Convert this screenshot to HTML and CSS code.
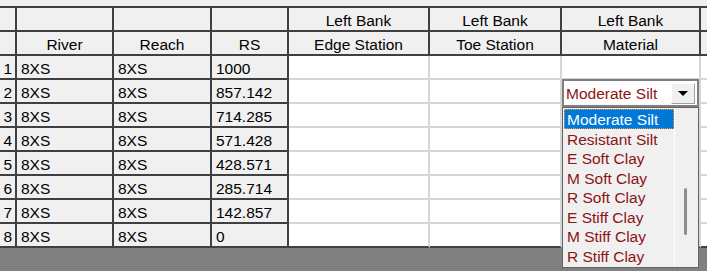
FILE: index.html
```html
<!DOCTYPE html>
<html lang="en">
  <head>
    <meta charset="UTF-8" />
    <meta name="viewport" content="width=device-width, initial-scale=1.0" />
    <title>Cross Section Data</title>
    <link rel="stylesheet" href="styles.css">
  </head>
  <body>
    <div class="toolbar"></div>
    <div class="gridwrap">
      <table class="grid">
        <colgroup>
          <col class="c-num" />
          <col class="c-river" />
          <col class="c-reach" />
          <col class="c-rs" />
          <col class="c-edge" />
          <col class="c-toe" />
          <col class="c-mat" />
          <col class="c-more" />
        </colgroup>
        <thead>
          <tr>
            <th></th>
            <th></th>
            <th></th>
            <th></th>
            <th>Left Bank</th>
            <th>Left Bank</th>
            <th>Left Bank</th>
            <th class="more"></th>
          </tr>
          <tr>
            <th></th>
            <th>River</th>
            <th>Reach</th>
            <th>RS</th>
            <th>Edge Station</th>
            <th>Toe Station</th>
            <th>Material</th>
            <th class="more"></th>
          </tr>
        </thead>
        <tbody>
          <tr><td class="num">1</td><td class="fixed">8XS</td><td class="fixed">8XS</td><td class="fixed">1000</td><td></td><td></td><td></td><td class="more"></td></tr>
          <tr><td class="num">2</td><td class="fixed">8XS</td><td class="fixed">8XS</td><td class="fixed">857.142</td><td></td><td></td><td></td><td class="more"></td></tr>
          <tr><td class="num">3</td><td class="fixed">8XS</td><td class="fixed">8XS</td><td class="fixed">714.285</td><td></td><td></td><td></td><td class="more"></td></tr>
          <tr><td class="num">4</td><td class="fixed">8XS</td><td class="fixed">8XS</td><td class="fixed">571.428</td><td></td><td></td><td></td><td class="more"></td></tr>
          <tr><td class="num">5</td><td class="fixed">8XS</td><td class="fixed">8XS</td><td class="fixed">428.571</td><td></td><td></td><td></td><td class="more"></td></tr>
          <tr><td class="num">6</td><td class="fixed">8XS</td><td class="fixed">8XS</td><td class="fixed">285.714</td><td></td><td></td><td></td><td class="more"></td></tr>
          <tr><td class="num">7</td><td class="fixed">8XS</td><td class="fixed">8XS</td><td class="fixed">142.857</td><td></td><td></td><td></td><td class="more"></td></tr>
          <tr class="last"><td class="num">8</td><td class="fixed">8XS</td><td class="fixed">8XS</td><td class="fixed">0</td><td></td><td></td><td></td><td class="more"></td></tr>
        </tbody>
      </table>

      <div class="combo">
        <span class="combo-text">Moderate Silt</span>
        <span class="combo-btn"><span class="arrow"></span></span>
      </div>

      <div class="droplist">
        <ul class="items">
          <li class="selected">Moderate Silt</li>
          <li>Resistant Silt</li>
          <li>E Soft Clay</li>
          <li>M Soft Clay</li>
          <li>R Soft Clay</li>
          <li>E Stiff Clay</li>
          <li>M Stiff Clay</li>
          <li>R Stiff Clay</li>
        </ul>
        <div class="scroll"><div class="thumb"></div></div>
      </div>
    </div>
  </body>
</html>
```

FILE: styles.css
```css
body {
  margin: 0;
  background-color: #808080;
  font-family: "Liberation Sans", Arial, sans-serif;
  font-size: 15.5px;
  color: #000;
  width: 707px;
  height: 271px;
  overflow: hidden;
}
.toolbar {
  height: 6px;
  background-color: #f0f0f0;
}
.gridwrap {
  position: relative;
  width: 707px;
}
.grid {
  border-collapse: separate;
  border-spacing: 0;
  table-layout: fixed;
  width: 707px;
  border-top: 2px solid #404040;
}
.c-num { width: 17px; }
.c-river { width: 97px; }
.c-reach { width: 98px; }
.c-rs { width: 77px; }
.c-edge { width: 141px; }
.c-toe { width: 132px; }
.c-mat { width: 139px; }
.c-more { width: 6px; }
th,
td {
  box-sizing: border-box;
  height: 24px;
  padding: 4px 4px 0 4px;
  line-height: 18px;
  vertical-align: top;
  white-space: nowrap;
  overflow: hidden;
  font-weight: normal;
  border-right: 2px solid #d6d6d6;
  border-bottom: 2px solid #d6d6d6;
  background-color: #fff;
}
th {
  background-color: #f0f0f0;
  text-align: center;
  border-color: #404040;
}
td {
  text-align: left;
}
td.num,
td.fixed {
  background-color: #f0f0f0;
  border-color: #404040;
}
td.num {
  text-align: right;
  padding: 4px 3px 0 0;
}
.last td {
  border-bottom-color: #404040;
}
th.more,
td.more {
  padding: 0;
  border-right: none;
}

/* open combo box on row 2 */
.combo {
  position: absolute;
  left: 562px;
  top: 73px;
  width: 137px;
  height: 28px;
  box-sizing: border-box;
  border: 2px solid #7f7f7f;
  background-color: #fff;
  display: flex;
  align-items: center;
  justify-content: space-between;
}
.combo-text {
  color: #8b1414;
  padding-left: 2px;
  padding-top: 1px;
}
.combo-btn {
  width: 24px;
  height: 21px;
  margin-right: 2px;
  box-sizing: border-box;
  background-color: #f0f0f0;
  border: 1px solid #fff;
  border-right-color: #a0a0a0;
  border-bottom-color: #a0a0a0;
  display: flex;
  align-items: center;
  justify-content: center;
}
.arrow {
  width: 0;
  height: 0;
  border-left: 5px solid transparent;
  border-right: 5px solid transparent;
  border-top: 5px solid #000;
}
.droplist {
  position: absolute;
  left: 562px;
  top: 101px;
  width: 137px;
  height: 161px;
  box-sizing: border-box;
  border: 1px solid #646464;
  background-color: #f0f0f0;
  display: flex;
}
.items {
  list-style: none;
  margin: 0;
  padding: 1px 0 0 1px;
  width: 110px;
}
.items li {
  height: 19.5px;
  line-height: 19px;
  padding-left: 2px;
  color: #8b1414;
  box-sizing: border-box;
  border: 1px solid transparent;
  white-space: nowrap;
}
.items li.selected {
  background-color: #0078d7;
  color: #fff;
  border: 1px dotted #f0963c;
}
.scroll {
  flex: 1;
  border-left: 1px solid #fff;
  position: relative;
}
.thumb {
  position: absolute;
  left: 9px;
  top: 80px;
  width: 3px;
  height: 47px;
  border-radius: 2px;
  background-color: #8e8e8e;
}
```
